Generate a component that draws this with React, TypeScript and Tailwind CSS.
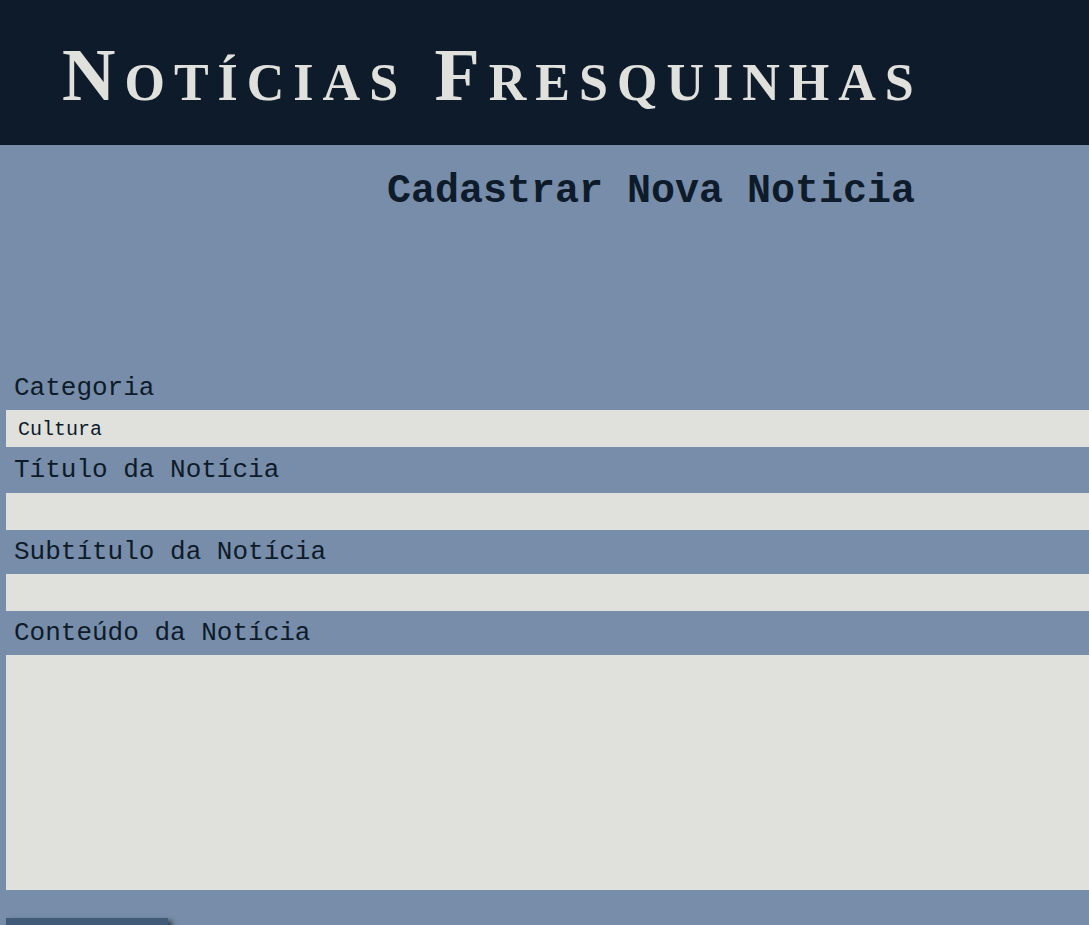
import React from "react";

const mono = { fontFamily: '"Liberation Mono", "DejaVu Sans Mono", monospace' };

export default function App() {
  return (
    <div className="min-h-screen bg-[#778da9] overflow-hidden">
      {/* Header */}
      <header className="bg-[#0d1b2a] h-[145px] flex items-center pl-[62px]">
        <h1
          className="text-[#e0e1dd] text-[74px] font-bold leading-none tracking-[9px] [font-variant:small-caps] pt-[4px]"
          style={{ fontFamily: '"Liberation Serif", "DejaVu Serif", serif' }}
        >
          Notícias Fresquinhas
        </h1>
      </header>

      <main className="pl-[6px] text-[#0d1b2a]" style={mono}>
        <h2 className="text-[40px] font-bold leading-[48px] pl-[381px] pt-[23px] h-[221px]">
          Cadastrar Nova Noticia
        </h2>

        <form className="flex flex-col">
          <label className="text-[26px] leading-[44px] pl-2 h-[44px]">Categoria</label>
          <select className="w-full h-[37px] bg-[#e0e1dd] text-[20px] pl-[12px] pt-[3px] appearance-none outline-none">
            <option>Cultura</option>
          </select>

          <label className="text-[26px] leading-[46px] pl-2 h-[46px]">Título da Notícia</label>
          <input className="w-full h-[37px] bg-[#e0e1dd] outline-none" />

          <label className="text-[26px] leading-[44px] pl-2 h-[44px]">Subtítulo da Notícia</label>
          <input className="w-full h-[37px] bg-[#e0e1dd] outline-none" />

          <label className="text-[26px] leading-[44px] pl-2 h-[44px]">Conteúdo da Notícia</label>
          <textarea className="w-full h-[235px] bg-[#e0e1dd] outline-none resize-none block" />

          <div className="pt-[28px]">
            <button
              type="button"
              className="w-[162px] h-[50px] bg-[#415a77] text-[#e0e1dd] text-[22px] pt-[14px] shadow-[4px_3px_5px_rgba(0,0,0,0.6)]"
            >
              Cadastrar
            </button>
          </div>
        </form>
      </main>
    </div>
  );
}
